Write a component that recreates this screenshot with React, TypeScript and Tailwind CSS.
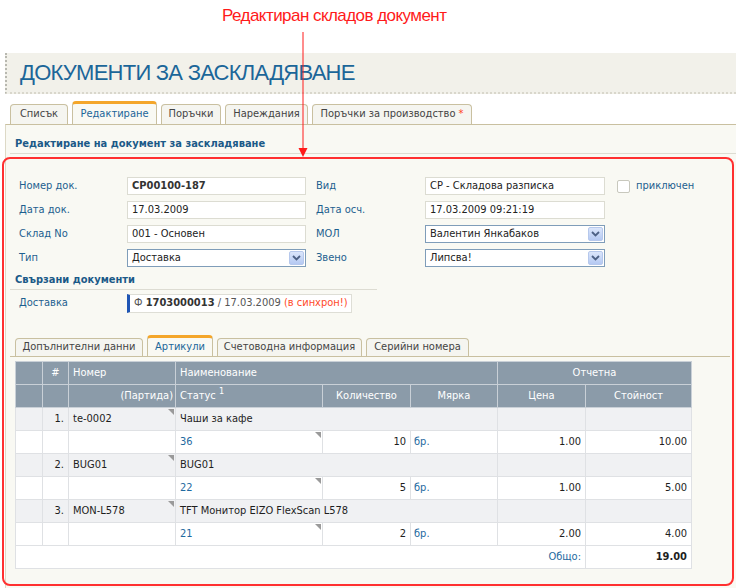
import React from "react";

const F = { fontFamily: '"DejaVu Sans Condensed", "DejaVu Sans", Tahoma, sans-serif' };

function Input({ w, children, bold }: { w: string; children: React.ReactNode; bold?: boolean }) {
  return (
    <div className={`${w} h-[18px] bg-white border border-[#dcdcd2] flex items-center px-[4px] text-[11px] text-[#222] ${bold ? "font-bold text-[#333]" : ""}`}>
      {children}
    </div>
  );
}

function Select({ w, children }: { w: string; children: React.ReactNode }) {
  return (
    <div className={`${w} h-[18px] bg-white border border-[#7f9db9] flex items-center pl-[4px] pr-[1px] text-[11px] text-[#222]`}>
      <span className="flex-1">{children}</span>
      <div className="w-[15px] h-[14px] rounded-[2px] border border-[#b6c8ec] bg-gradient-to-b from-[#dbe6fb] to-[#b5c9f2] flex items-center justify-center">
        <svg width="9" height="6" viewBox="0 0 9 6">
          <path d="M1 1 L4.5 4.5 L8 1" fill="none" stroke="#4d6185" strokeWidth="1.8" />
        </svg>
      </div>
    </div>
  );
}

function Tri() {
  return (
    <svg className="absolute top-[1px] right-[1px]" width="6" height="6" viewBox="0 0 6 6">
      <path d="M0 0 L6 0 L6 6 Z" fill="#9a9a9a" />
    </svg>
  );
}

const items = [
  { n: "1.", code: "te-0002", name: "Чаши за кафе", st: "36", q: "10", p: "1.00", v: "10.00" },
  { n: "2.", code: "BUG01", name: "BUG01", st: "22", q: "5", p: "1.00", v: "5.00" },
  { n: "3.", code: "MON-L578", name: "TFT Монитор EIZO FlexScan L578", st: "21", q: "2", p: "2.00", v: "4.00" },
];

export default function App() {
  const th = "border border-[#c9d0d7] text-white font-normal text-[11px] px-[4px] h-[23px]";
  const td = "border border-[#dfe1e4] text-[11px] text-[#1e1e1e] px-[4px] h-[23px]";
  return (
    <div className="relative w-[736px] h-[588px] bg-white overflow-hidden" style={F}>
      {/* annotation title */}
      <div className="h-[53px] pl-[222px] pt-[3px]">
        <span className="text-[17px] text-[#ff1a1a] tracking-[-0.55px]" style={{ fontFamily: '"Liberation Sans Narrow", "Liberation Sans", Arial, sans-serif' }}>
          Редактиран складов документ
        </span>
      </div>

      {/* header */}
      <div className="ml-[5px] h-[41px] bg-[#f2f1ea] border-l-2 border-dotted border-l-[#b8b8b0] border-b-2 border-b-[#d9d7cc] flex items-center pl-[13px]">
        <span className="text-[22px] text-[#1b6699] tracking-[-0.75px]" style={{ fontFamily: '"Liberation Sans", Arial, sans-serif' }}>
          ДОКУМЕНТИ ЗА ЗАСКЛАДЯВАНЕ
        </span>
      </div>

      {/* tabs */}
      <div className="mt-[6px] ml-[10px] flex items-end gap-[4px] h-[24px]">
        <div className="w-[58px] h-[20px] border border-b-0 border-[#c9c0a0] rounded-t-[4px] bg-[#f5f5f0] text-[11px] text-[#444] flex items-center justify-center">Списък</div>
        <div className="w-[85px] h-[23px] border border-b-0 border-[#c9c0a0] border-t-[3px] border-t-[#f4a62a] rounded-t-[4px] bg-[#f9f9f3] text-[11px] text-[#1b6699] flex items-center justify-center">Редактиране</div>
        <div className="w-[60px] h-[20px] border border-b-0 border-[#c9c0a0] rounded-t-[4px] bg-[#f5f5f0] text-[11px] text-[#444] flex items-center justify-center">Поръчки</div>
        <div className="w-[83px] h-[20px] border border-b-0 border-[#c9c0a0] rounded-t-[4px] bg-[#f5f5f0] text-[11px] text-[#444] flex items-center justify-center">Нареждания</div>
        <div className="w-[160px] h-[20px] border border-b-0 border-[#c9c0a0] rounded-t-[4px] bg-[#f5f5f0] text-[11px] text-[#444] flex items-center justify-center">
          Поръчки за производство <span className="text-[#ff3b1f] ml-[3px]">*</span>
        </div>
      </div>

      {/* content panel */}
      <div className="ml-[5px] h-[470px] bg-[#f9f9f3] border-t border-t-[#c9c0a0] border-l border-l-[#ddd9c6]">
        <div className="ml-[4px] pt-[12px] pb-[2px] pl-[5px] border-b border-[#dddcd2]">
          <div className="text-[11px] font-bold text-[#1b5a88] h-[14px] leading-[14px]">Редактиране на документ за заскладяване</div>
        </div>

        {/* form */}
        <div className="mt-[20px] pl-[13px] flex flex-col">
          <div className="h-[24px] flex items-center">
            <div className="w-[108px] text-[11px] text-[#1d5f8f]">Номер док.</div>
            <Input w="w-[179px]" bold>СР00100-187</Input>
            <div className="w-[109px] ml-[10px] text-[11px] text-[#1d5f8f]">Вид</div>
            <Input w="w-[180px]">СР - Складова разписка</Input>
            <div className="ml-[12px] w-[13px] h-[13px] border border-[#c8c8bd] bg-white rounded-[2px]" />
            <div className="ml-[6px] text-[11px] text-[#1d5f8f]">приключен</div>
          </div>
          <div className="h-[24px] flex items-center">
            <div className="w-[108px] text-[11px] text-[#1d5f8f]">Дата док.</div>
            <Input w="w-[179px]">17.03.2009</Input>
            <div className="w-[109px] ml-[10px] text-[11px] text-[#1d5f8f]">Дата осч.</div>
            <Input w="w-[180px]">17.03.2009 09:21:19</Input>
          </div>
          <div className="h-[24px] flex items-center">
            <div className="w-[108px] text-[11px] text-[#1d5f8f]">Склад No</div>
            <Input w="w-[179px]">001 - Основен</Input>
            <div className="w-[109px] ml-[10px] text-[11px] text-[#1d5f8f]">МОЛ</div>
            <Select w="w-[180px]">Валентин Янкабаков</Select>
          </div>
          <div className="h-[24px] flex items-center">
            <div className="w-[108px] text-[11px] text-[#1d5f8f]">Тип</div>
            <Select w="w-[179px]">Доставка</Select>
            <div className="w-[109px] ml-[10px] text-[11px] text-[#1d5f8f]">Звено</div>
            <Select w="w-[180px]">Липсва!</Select>
          </div>
        </div>

        {/* linked docs */}
        <div className="mt-[3px] ml-[4px] w-[367px] pl-[5px] pb-[2px] border-b border-[#dddcd2]">
          <div className="text-[11px] font-bold text-[#1b5a88] h-[14px] leading-[14px]">Свързани документи</div>
        </div>
        <div className="mt-[3px] pl-[13px] h-[21px] flex items-center">
          <div className="w-[108px] text-[11px] text-[#1d5f8f]">Доставка</div>
          <div className="w-[225px] h-[19px] bg-white border border-[#deded6] border-l-[3px] border-l-[#1f55b4] flex items-center pl-[4px] text-[11px] text-[#555]">
            Ф&nbsp;<b className="text-[#333]">1703000013</b>&nbsp;/ 17.03.2009&nbsp;<span className="text-[#ff4a2a]">(в синхрон!)</span>
          </div>
        </div>

        {/* inner tabs */}
        <div className="mt-[22px] ml-[4px] mr-[6px] pl-[5px] flex items-end gap-[4px] h-[21px] border-b border-[#c9c0a0]">
          <div className="w-[128px] h-[18px] border border-b-0 border-[#c9c0a0] rounded-t-[4px] bg-[#f5f5f0] text-[11px] text-[#444] flex items-center justify-center">Допълнителни данни</div>
          <div className="w-[66px] h-[21px] border border-b-0 border-[#c9c0a0] border-t-[3px] border-t-[#f4a62a] rounded-t-[4px] bg-[#f9f9f3] text-[11px] text-[#1b6699] flex items-center justify-center">Артикули</div>
          <div className="w-[145px] h-[18px] border border-b-0 border-[#c9c0a0] rounded-t-[4px] bg-[#f5f5f0] text-[11px] text-[#444] flex items-center justify-center">Счетоводна информация</div>
          <div className="w-[103px] h-[18px] border border-b-0 border-[#c9c0a0] rounded-t-[4px] bg-[#f5f5f0] text-[11px] text-[#444] flex items-center justify-center">Серийни номера</div>
        </div>

        {/* table */}
        <table className="mt-[4px] ml-[9px] w-[676px] table-fixed border-collapse border border-[#d5d8dc]">
          <colgroup>
            <col className="w-[27px]" />
            <col className="w-[26px]" />
            <col className="w-[107px]" />
            <col className="w-[147px]" />
            <col className="w-[88px]" />
            <col className="w-[87px]" />
            <col className="w-[88px]" />
            <col className="w-[106px]" />
          </colgroup>
          <thead className="bg-[#8b9ba9]">
            <tr>
              <th className={th}></th>
              <th className={`${th} text-center`}>#</th>
              <th className={`${th} text-left`}>Номер</th>
              <th className={`${th} text-left`} colSpan={3}>Наименование</th>
              <th className={`${th} text-center`} colSpan={2}>Отчетна</th>
            </tr>
            <tr>
              <th className={th}></th>
              <th className={th}></th>
              <th className={`${th} text-right !pr-[2px]`}>(Партида)</th>
              <th className={`${th} text-left`}>Статус <sup className="text-[9px]">1</sup></th>
              <th className={`${th} text-center`}>Количество</th>
              <th className={`${th} text-center`}>Мярка</th>
              <th className={`${th} text-center`}>Цена</th>
              <th className={`${th} text-center`}>Стойност</th>
            </tr>
          </thead>
          <tbody>
            {items.map((it) => (
              <React.Fragment key={it.n}>
                <tr className="bg-[#f0f1f3]">
                  <td className={td}></td>
                  <td className={`${td} text-right`}>{it.n}</td>
                  <td className={`${td} relative`}>{it.code}<Tri /></td>
                  <td className={td} colSpan={3}>{it.name}</td>
                  <td className={td}></td>
                  <td className={td}></td>
                </tr>
                <tr className="bg-white">
                  <td className={td}></td>
                  <td className={td}></td>
                  <td className={td}></td>
                  <td className={`${td} relative !text-[#1f6aa0]`}>{it.st}<Tri /></td>
                  <td className={`${td} text-right`}>{it.q}</td>
                  <td className={`${td} !text-[#1f6aa0] !px-[3px]`}>бр.</td>
                  <td className={`${td} text-right`}>{it.p}</td>
                  <td className={`${td} text-right`}>{it.v}</td>
                </tr>
              </React.Fragment>
            ))}
            <tr className="bg-white">
              <td className={`${td} text-right !text-[#1f6aa0]`} colSpan={7}>Общо:</td>
              <td className={`${td} text-right font-bold`}>19.00</td>
            </tr>
          </tbody>
        </table>
      </div>

      {/* annotation overlays */}
      <div className="absolute left-[2px] top-[157px] w-[732px] h-[429px] border-2 border-[#ff3030] rounded-[8px] pointer-events-none" />
      <svg className="absolute left-[297px] top-[32px] pointer-events-none" width="12" height="126" viewBox="0 0 12 126">
        <line x1="6" y1="0" x2="6" y2="118" stroke="#ff1a1a" strokeWidth="1" />
        <path d="M1.5 116 L10.5 116 L6 125 Z" fill="#ff1a1a" />
      </svg>
    </div>
  );
}
